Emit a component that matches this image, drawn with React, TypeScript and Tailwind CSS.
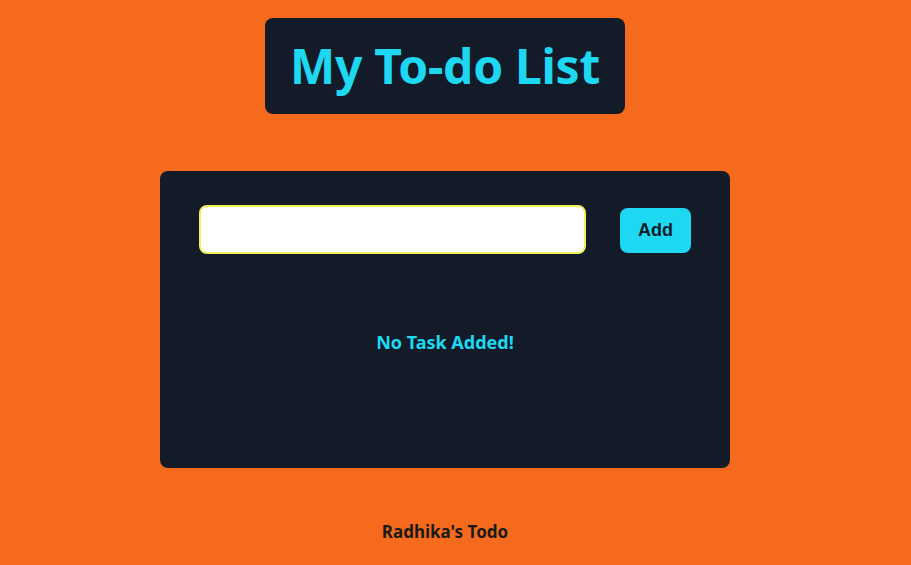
import { useState } from 'react';

export default function App() {
  const [task, setTask] = useState('');
  const [todos, setTodos] = useState<string[]>([]);

  const addTask = () => {
    if (!task.trim()) return;
    setTodos([...todos, task.trim()]);
    setTask('');
  };

  return (
    <div className="min-h-screen bg-[#f56a1c] flex flex-col items-center pr-[21px] font-['Noto_Sans',sans-serif]">
      <div className="mt-[18px] w-[360px] h-[96px] bg-[#141b28] rounded-lg flex items-center justify-center">
        <h1 className="text-[48px] leading-none font-bold text-[#1ed8f2] tracking-[-0.3px]">My To-do List</h1>
      </div>

      <div className="mt-[57px] w-[570px] h-[297px] bg-[#141b28] rounded-lg pt-[34px] px-[39px]">
        <div className="flex items-center">
          <input
            value={task}
            onChange={(e) => setTask(e.target.value)}
            className="w-[387px] h-[49px] bg-white border-2 border-[#eef35a] rounded-lg px-3 outline-none"
          />
          <button
            onClick={addTask}
            className="ml-[34px] w-[71px] h-[45px] mt-[1px] bg-[#1ed8f2] rounded-lg text-[18px] font-bold text-[#141b28] font-['Liberation_Sans',sans-serif]"
          >
            Add
          </button>
        </div>

        {todos.length === 0 ? (
          <p className="mt-[75px] text-center text-[18px] font-bold text-[#1ed8f2]">No Task Added!</p>
        ) : (
          <ul className="mt-6 space-y-2 text-white">
            {todos.map((t, i) => (
              <li key={i}>{t}</li>
            ))}
          </ul>
        )}
      </div>

      <p className="mt-[51px] text-[17px] font-bold text-[#1a1a1a]">Radhika's Todo</p>
    </div>
  );
}
